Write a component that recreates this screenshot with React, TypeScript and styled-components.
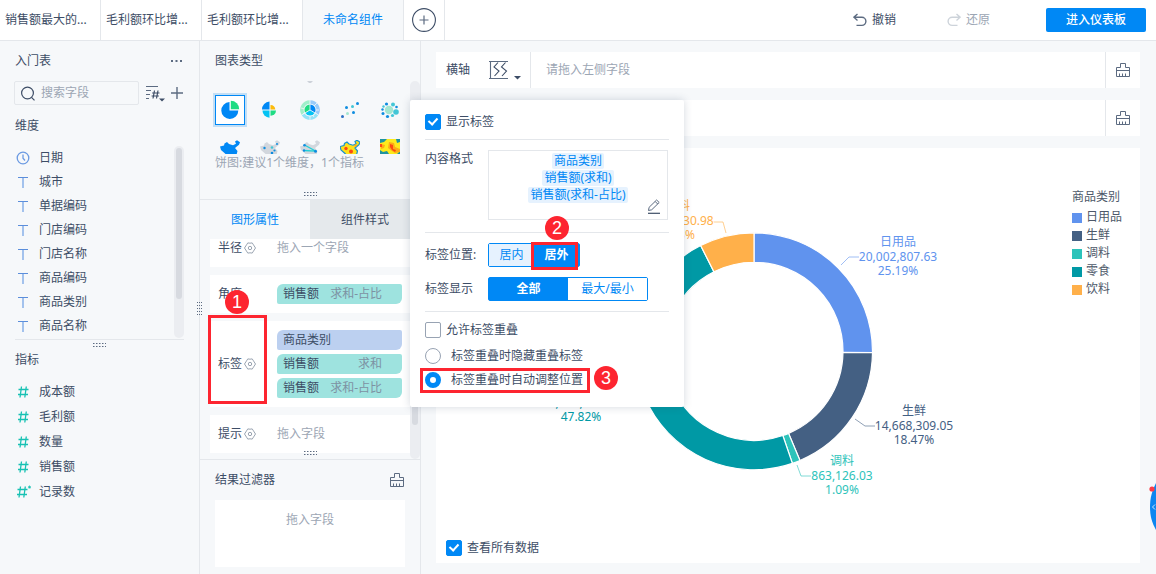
import React, { useState } from "react";
import styled, { createGlobalStyle, css } from "styled-components";

const color = {
  text: "#3d4d66",
  muted: "#9ca6b4",
  icon: "#5c6b81",
  line: "#e4e7eb",
  panel: "#f6f8fa",
  blue: "#0088f5",
  dimension: "#bcd0f0",
  measure: "#9ee3df",
  mark: "#fd2530",
};

const GlobalStyle = createGlobalStyle`
  *, *::before, *::after { box-sizing: border-box; }
  body {
    margin: 0;
    background: ${color.panel};
    color: ${color.text};
    font: 12px/18px "Noto Sans", "Noto Sans CJK SC", sans-serif;
  }
  button, input { font: inherit; color: inherit; }
  button { padding: 0; border: 0; background: none; cursor: pointer; }
  h2, p, ul { margin: 0; padding: 0; font: inherit; list-style: none; }
  svg { display: block; flex: none; }
`;

/* ---------- page frame ---------- */

const Page = styled.div`
  display: flex;
  flex-direction: column;
  min-height: 100vh;
  overflow: hidden;
`;

const TopBar = styled.header`
  display: flex;
  justify-content: space-between;
  background: #fff;
  border-bottom: 1px solid ${color.line};
`;

const Tabs = styled.nav`
  display: flex;
`;

const TabButton = styled.button<{ $active?: boolean }>`
  width: 101px;
  height: 40px;
  padding: 0 5px;
  border-right: 1px solid ${color.line};
  text-align: ${(p) => (p.$active ? "center" : "left")};
  white-space: nowrap;
  color: ${(p) => (p.$active ? color.blue : color.text)};
  background: ${(p) => (p.$active ? color.panel : "#fff")};
`;

const AddTab = styled.button`
  display: flex;
  align-items: center;
  justify-content: center;
  width: 41px;
  border-right: 1px solid ${color.line};
`;

const TopActions = styled.div`
  display: flex;
  align-items: center;
  gap: 51px;
  padding-right: 10px;
`;

const HistoryButton = styled.button`
  display: flex;
  align-items: center;
  gap: 5px;
  &:disabled {
    color: ${color.muted};
  }
`;

const PrimaryButton = styled.button`
  width: 100px;
  height: 24px;
  margin-left: 5px;
  border-radius: 2px;
  background: ${color.blue};
  color: #fff;
  font-weight: 500;
`;

const Workspace = styled.div`
  display: flex;
  flex: 1;
`;

const SideColumn = styled.aside<{ $width: number }>`
  position: relative;
  display: flex;
  flex-direction: column;
  flex: none;
  width: ${(p) => p.$width}px;
  border-right: 1px solid ${color.line};
`;

const PanelHeading = styled.div`
  display: flex;
  align-items: center;
  justify-content: space-between;
  height: 40px;
  padding: 0 16px 0 15px;
`;

const IconButton = styled.button`
  display: flex;
  align-items: center;
  justify-content: center;
`;

const Track = styled.div`
  display: flex;
  justify-content: center;
  align-items: flex-start;
  flex: none;
  width: 10px;
  padding: 2px 0;
  border-radius: 5px;
  background: #ebedf1;
`;

const Thumb = styled.div<{ $size: number }>`
  width: 6px;
  height: ${(p) => p.$size}px;
  border-radius: 3px;
  background: #d7dae0;
`;

/* ---------- field list ---------- */

const SearchRow = styled.div`
  display: flex;
  align-items: center;
  gap: 6px;
  padding: 0 16px 0 14px;
`;

const SearchBox = styled.label`
  display: flex;
  align-items: center;
  gap: 6px;
  flex: 1;
  min-width: 0;
  height: 24px;
  padding-left: 6px;
  border: 1px solid ${color.line};
  border-radius: 2px;
`;

const SearchInput = styled.input`
  width: 80px;
  padding: 0;
  border: 0;
  outline: 0;
  background: none;
  &::placeholder {
    color: ${color.muted};
  }
`;

const GroupTitle = styled.h2<{ $height: number }>`
  padding-left: 15px;
  line-height: ${(p) => p.$height}px;
`;

const ScrollList = styled.div`
  display: flex;
  margin: 0 15px;
  padding-bottom: 1px;
  border-bottom: 1px solid ${color.line};
`;

const FieldList = styled.ul<{ $row: number }>`
  flex: 1;
  li {
    display: flex;
    align-items: center;
    gap: 8px;
    height: ${(p) => p.$row}px;
  }
`;

const MeasureList = styled(FieldList)`
  padding: 6px 15px;
`;

const Grip = styled.div`
  display: flex;
  justify-content: center;
  padding: 3px 0 0;
`;

const ColumnGrip = styled.div`
  position: absolute;
  right: -3px;
  top: 261px;
`;

/* ---------- chart settings ---------- */

const ChartTypeScroll = styled.div`
  display: flex;
  height: 73px;
  overflow: hidden;
`;

const ChartTypeGrid = styled.div`
  display: grid;
  grid-template-columns: repeat(5, 30px);
  gap: 9px 10px;
  flex: 1;
  align-content: start;
  padding-left: 15px;
`;

const PreviousRow = styled.div`
  display: flex;
  justify-content: center;
  grid-column: 1 / -1;
  height: 5px;
`;

const ChartTypeButton = styled.button<{ $active?: boolean }>`
  display: flex;
  align-items: center;
  justify-content: center;
  width: 30px;
  height: 30px;
  ${(p) =>
    p.$active &&
    css`
      border: 1px solid ${color.blue};
      background: #fff;
      box-shadow: 0 0 0 2px #c3dff5;
    `}
`;

const ChartHint = styled.p`
  padding-left: 15px;
  line-height: 18px;
  color: ${color.muted};
`;

const TypeGrip = styled(Grip)`
  padding: 20px 0 3px;
  border-bottom: 1px solid ${color.line};
`;

const SettingTabs = styled.div`
  display: flex;
`;

const SettingTab = styled.button<{ $active?: boolean }>`
  flex: 1;
  height: 39px;
  color: ${(p) => (p.$active ? color.blue : color.text)};
  background: ${(p) => (p.$active ? "transparent" : "#e5e9ec")};
`;

const Attributes = styled.section`
  position: relative;
  display: flex;
  border-bottom: 1px solid ${color.line};
`;

const AttributeRows = styled.div`
  display: flex;
  flex-direction: column;
  gap: 8px;
  flex: 1;
  padding: 0 0 6px 10px;
`;

const AttributeRow = styled.div<{ $cut?: boolean }>`
  position: relative;
  display: flex;
  align-items: center;
  padding: ${(p) => (p.$cut ? "0 8px 10px" : "9px 8px")};
  background: #fff;
`;

const AttributeName = styled.div`
  display: flex;
  align-items: center;
  gap: 2px;
  width: 59px;
`;

const Pills = styled.div`
  display: flex;
  flex-direction: column;
  gap: 4px;
  flex: 1;
`;

const Pill = styled.div<{ $kind: "dimension" | "measure" }>`
  display: flex;
  justify-content: space-between;
  height: 20px;
  padding: 0 20px 0 6px;
  border-radius: 6px 2px;
  line-height: 20px;
  background: ${(p) => color[p.$kind]};
  span + span {
    color: #7d92a3;
  }
`;

const Placeholder = styled.span`
  line-height: 18px;
  color: ${color.muted};
`;

const EmptyDrop = styled(Placeholder)`
  line-height: 20px;
`;

const BottomGrip = styled.div`
  position: absolute;
  right: 0;
  bottom: 4px;
  left: 0;
  display: flex;
  justify-content: center;
`;

const FilterDrop = styled.div`
  flex: 1;
  margin: 0 15px 7px;
  padding-top: 11px;
  text-align: center;
  color: ${color.muted};
  background: #fff;
`;

/* ---------- canvas ---------- */

const Canvas = styled.main`
  position: relative;
  display: flex;
  flex-direction: column;
  gap: 12px;
  flex: 1;
  min-width: 0;
  padding: 11px 16px 11px 15px;
`;

const AxisRow = styled.div`
  display: flex;
  height: 36px;
  background: #fff;
`;

const AxisName = styled.div`
  display: flex;
  align-items: center;
  gap: 19px;
  width: 95px;
  padding-left: 10px;
  border-right: 1px solid ${color.line};
`;

const AxisDrop = styled.div`
  flex: 1;
  padding-left: 15px;
  line-height: 36px;
  color: ${color.muted};
`;

const AxisClear = styled(IconButton)`
  width: 35px;
  border-left: 1px solid ${color.line};
`;

const ChartCard = styled.section`
  display: flex;
  flex-direction: column;
  flex: 1;
  background: #fff;
`;

const ChartArea = styled.div`
  display: flex;
  flex: 1;
`;

const Plot = styled.div`
  display: flex;
  justify-content: center;
  flex: 1;
`;

const Legend = styled.div`
  width: 68px;
  padding-top: 40px;
  color: #4d5869;
`;

const LegendList = styled.ul`
  padding-top: 2px;
  li {
    display: flex;
    align-items: center;
    gap: 4px;
    height: 18px;
  }
`;

const Swatch = styled.span<{ $color: string }>`
  width: 10px;
  height: 10px;
  margin-top: 2px;
  background: ${(p) => p.$color};
`;

const ChartFooter = styled.div`
  padding: 0 10px 7px;
`;

const SliceText = styled.text`
  font-size: 12px;
  text-anchor: middle;
  stroke: #fff;
  stroke-width: 2px;
  paint-order: stroke;
`;

/* ---------- form controls ---------- */

const Choice = styled.label<{ $gap: number }>`
  display: flex;
  align-items: center;
  gap: ${(p) => p.$gap}px;
  height: 16px;
`;

const Checkbox = styled.input.attrs({ type: "checkbox" })`
  appearance: none;
  position: relative;
  width: 16px;
  height: 16px;
  margin: 0;
  border: 1px solid #98a3b3;
  border-radius: 2px;
  background: #fff;
  &:checked {
    border-color: ${color.blue};
    background: ${color.blue};
  }
  &:checked::after {
    content: "";
    position: absolute;
    left: 4px;
    top: 1px;
    width: 6px;
    height: 9px;
    border: solid #fff;
    border-width: 0 2px 2px 0;
    transform: rotate(42deg);
  }
`;

const Radio = styled.input.attrs({ type: "radio" })`
  appearance: none;
  width: 16px;
  height: 16px;
  margin: 0;
  border: 1px solid #98a3b3;
  border-radius: 50%;
  background: #fff;
  &:checked {
    border: 5px solid ${color.blue};
  }
`;

/* ---------- label popup ---------- */

const Popup = styled.div`
  position: absolute;
  z-index: 2;
  left: -11px;
  top: 59px;
  width: 274px;
  padding: 0 15px;
  border-radius: 2px;
  background: #fff;
  box-shadow: 0 0 8px rgba(40, 60, 90, 0.2);
`;

const PopupSection = styled.div<{ $pad: string; $gap?: number; $last?: boolean }>`
  display: flex;
  flex-direction: column;
  gap: ${(p) => p.$gap ?? 0}px;
  padding: ${(p) => p.$pad};
  border-bottom: ${(p) => (p.$last ? "0" : `1px solid ${color.line}`)};
`;

const FormRow = styled.div<{ $top?: boolean }>`
  display: flex;
  align-items: ${(p) => (p.$top ? "flex-start" : "center")};
`;

const FormName = styled.span`
  width: 63px;
`;

const FormatBox = styled.div`
  position: relative;
  display: flex;
  flex-direction: column;
  align-items: center;
  gap: 1px;
  width: 180px;
  height: 70px;
  padding-top: 2px;
  border: 1px solid ${color.line};
`;

const Token = styled.span`
  padding: 0 2px;
  border-radius: 2px;
  line-height: 16px;
  color: ${color.blue};
  background: #e6f2fe;
`;

const EditButton = styled(IconButton)`
  position: absolute;
  right: 6px;
  bottom: 5px;
`;

const Segments = styled.div`
  position: relative;
  display: flex;
  height: 24px;
  border: 1px solid ${color.blue};
  border-radius: 2px;
`;

const Segment = styled.button<{ $width: number; $active?: boolean; $tint?: boolean }>`
  width: ${(p) => p.$width}px;
  line-height: 22px;
  color: ${(p) => (p.$active ? "#fff" : color.blue)};
  font-weight: ${(p) => (p.$active ? 700 : 400)};
  background: ${(p) => (p.$active ? color.blue : p.$tint ? "#e6f2fe" : "#fff")};
`;

const RadioGroup = styled.div`
  display: flex;
  flex-direction: column;
  gap: 8px;
`;

const RadioRow = styled.div`
  position: relative;
`;

/* ---------- step marks over the page ---------- */

const markPlace = {
  name: { frame: [-2, -6, 59, 89], badge: [15, -31] },
  outside: { frame: [42, -2, 47, 28], badge: [56, -28] },
  adjust: { frame: [-5, -4, 170, 25], badge: [169, -6] },
};

type MarkSpot = keyof typeof markPlace;

const MarkFrame = styled.div<{ $spot: MarkSpot }>`
  position: absolute;
  z-index: 1;
  left: ${(p) => markPlace[p.$spot].frame[0]}px;
  top: ${(p) => markPlace[p.$spot].frame[1]}px;
  width: ${(p) => markPlace[p.$spot].frame[2]}px;
  height: ${(p) => markPlace[p.$spot].frame[3]}px;
  border: 3px solid ${color.mark};
  pointer-events: none;
`;

const MarkBadge = styled.span<{ $spot: MarkSpot }>`
  position: absolute;
  z-index: 1;
  left: ${(p) => markPlace[p.$spot].badge[0]}px;
  top: ${(p) => markPlace[p.$spot].badge[1]}px;
  width: 24px;
  height: 24px;
  border-radius: 50%;
  background: ${color.mark};
  color: #fff;
  font: 18px/24px "Liberation Sans", sans-serif;
  text-align: center;
`;

const HelpHandle = styled.button`
  position: fixed;
  right: 0;
  top: 482px;
`;

/* ---------- icons ---------- */

const PlusIcon = ({ size }: { size: number }) => (
  <svg width={size} height={size} viewBox="0 0 12 12" fill="none" stroke={color.icon} strokeWidth="1.4">
    <path d="M6 0v12M0 6h12" />
  </svg>
);

const AddIcon = () => (
  <svg width="24" height="24" viewBox="0 0 24 24" fill="none" stroke={color.text}>
    <circle cx="12" cy="12" r="11.4" strokeWidth="1.1" />
    <path d="M12 7.5v9M7.5 12h9" stroke={color.icon} strokeWidth="1.2" />
  </svg>
);

const TurnIcon = ({ forward }: { forward?: boolean }) => (
  <svg width="14" height="14" viewBox="0 0 14 14" fill="none" stroke={forward ? "#cdd3da" : color.icon} strokeWidth="1.4">
    {forward ? (
      <path d="M9.5 1l3.6 3.2-3.6 3.2M13 4.2H5.2a4.1 4.1 0 0 0 0 8.2h5.3" />
    ) : (
      <path d="M4.5 1L.9 4.2l3.6 3.2M1 4.2h7.8a4.1 4.1 0 0 1 0 8.2H3.5" />
    )}
  </svg>
);

const MoreIcon = () => (
  <svg width="12" height="4" viewBox="0 0 12 4" fill={color.icon}>
    <path d="M0 1h2v2H0zM4.500 1h2v2h-2zM9 1h2v2H9z" />
  </svg>
);

const SearchIcon = () => (
  <svg width="14" height="15" viewBox="0 0 14 15" fill="none" stroke={color.text} strokeWidth="1.2">
    <circle cx="6.5" cy="7" r="5.9" />
    <path d="M10.500 11.300l3 3" />
  </svg>
);

const SortIcon = () => (
  <svg width="20" height="18" viewBox="0 0 20 18" fill="none" stroke={color.icon} strokeWidth="1.2">
    <path d="M1 2.500h12M1 6.500h5M1 10.500h4M1 14.500h3" />
    <path d="M9.500 6.500l-1.500 8M13 6.500l-1.500 8M7.200 9h7.300M6.600 12h7.200" stroke={color.text} />
    <path d="M14 14.500h6l-3 3z" fill={color.text} stroke="none" />
  </svg>
);

const ClockIcon = () => (
  <svg width="16" height="14" viewBox="0 0 16 14" fill="none" stroke="#6b9ae2" strokeWidth="1.3">
    <circle cx="8" cy="7" r="5.800" />
    <path d="M8 3.500v3.700l2 2.300" />
  </svg>
);

const TextIcon = () => (
  <svg width="16" height="14" viewBox="0 0 16 14" fill="none">
    <path d="M3 2.500h10" stroke="#5b8edb" />
    <path d="M8 3v10" stroke="#8fb4ea" strokeWidth="1.6" />
  </svg>
);

const NumberIcon = ({ starred }: { starred?: boolean }) => (
  <svg width="16" height="14" viewBox="0 0 16 14" fill="none" stroke="#17c1b3" strokeWidth="1.3">
    <g transform={starred ? "translate(-1 0)" : undefined}>
      <path d="M6.500 1.500l-1.500 11M11.300 1.500l-1.500 11M3.500 4.500h10M3 9.500h10" />
    </g>
    {starred && <path d="M14.500 .5v3M13 1.500l3 1.500M16 1.500l-3 1.500" strokeWidth=".8" />}
  </svg>
);

const GripIcon = ({ vertical }: { vertical?: boolean }) => {
  const dots = [0, 1, 2, 3, 4].flatMap((i) => (vertical ? [0, 2, 4].map((j) => [j, i * 3]) : [0, 3].map((j) => [i * 3, j])));
  return (
    <svg width={vertical ? 5 : 13} height={vertical ? 13 : 4} fill={color.icon}>
      {dots.map(([x, y]) => (
        <rect key={`${x}-${y}`} x={x} y={y} width={vertical ? 1 : 1.5} height="1" />
      ))}
    </svg>
  );
};

const BroomIcon = () => (
  <svg width="14" height="14" viewBox="0 0 14 14" fill="none" stroke={color.icon}>
    <path d="M4.500 4.500v-4h5v4h4v9H.5v-9zM.5 7.500h13M3.500 10.500v3M6.500 10.500v3M9.500 10.500v3" />
  </svg>
);

const GearIcon = () => (
  <svg width="12" height="12" viewBox="0 0 12 12" fill="none" stroke="#9ba5b2">
    <path d="M3.800 .9l2.200.3 2.200-.3 1.300 2L11.500 6l-2 3.100-1.300 2L6 10.800l-2.200.3-1.300-2L.5 6l2-3.100z" strokeLinejoin="round" />
    <circle cx="6" cy="6" r="1.700" />
  </svg>
);

const AxisIcon = () => (
  <svg width="32" height="20" viewBox="0 0 32 20" fill="none" stroke={color.icon}>
    <path d="M0 1.500h19M0 18.500h19M1.500 1v18" strokeWidth="1.100" />
    <path d="M9 2.500L5 7l5 4-4.500 5M16.500 2.500l-4 4.500 5 4-4.500 5" stroke={color.text} strokeWidth="1.1" />
    <path d="M25 16h7l-3.500 3.500z" fill={color.text} stroke="none" />
  </svg>
);

const PencilIcon = () => (
  <svg width="14" height="15" viewBox="0 0 14 15" fill="none" stroke={color.icon}>
    <path d="M1.500 11.500l.6-3.200L9.600 1l2.600 2.500-7.500 7.300zM8.200 2.500l2.500 2.500" />
    <path d="M1 14.300h12" stroke={color.text} strokeWidth="1.200" />
  </svg>
);

const chinaPath =
  "M0 6.5L4 5.500 4.500 3.500 7 2 9 4l4 1.200L16 3.700 15 1.500 17 .2 20 2.200 19 4.700 16.500 6.700 15 8l2.500 3-1 4-4.500 2-5-1-2-2.500L1 10z";

const PieIcon = () => (
  <svg width="20" height="20" viewBox="0 0 20 20">
    <path d="M9.500 2a8.500 8.500 0 1 0 8.800 8.500H9.500z" fill="#0088f5" />
    <path d="M10.800.8v8.500h8.400A8.400 8.400 0 0 0 10.800.8z" fill="#1fdc83" />
  </svg>
);

const RoseIcon = () => (
  <svg width="20" height="20" viewBox="0 0 20 20">
    <path d="M9.500 1.500v8H2a8 8 0 0 1 7.500-8z" fill="#0088f5" />
    <path d="M10.500 5v4.500h4.800A5 5 0 0 0 10.500 5z" fill="#fcbb0c" />
    <path d="M9.500 10.500v7.300A7.300 7.300 0 0 1 2.500 10.500z" fill="#04c3f3" />
    <path d="M10.500 10.500v5.300a5.300 5.300 0 0 0 5.500-5.300z" fill="#1fdc83" />
  </svg>
);

const SunburstIcon = () => (
  <svg width="20" height="20" viewBox="0 0 20 20" fill="none">
    <g strokeWidth="3.500">
      <path d="M10 2a8 8 0 0 1 7 12" stroke="#98cbfa" />
      <path d="M17 14a8 8 0 0 1-14 0" stroke="#93e2f7" />
      <path d="M3 14a8 8 0 0 1 7-12" stroke="#a0efca" />
    </g>
    <path d="M17 3l-4 4M1 8l4 1M19 10h-4M10 20v-4M3 14l3-2M14 17l-2-3" stroke={color.panel} strokeWidth=".8" />
    <path d="M10 10V4.500a5.500 5.500 0 0 1 4.800 8.200z" fill="#0088f5" />
    <path d="M10 10l4.800 2.700a5.500 5.500 0 0 1-9.600 0z" fill="#04c3f3" />
    <path d="M10 10l-4.800 2.700A5.500 5.500 0 0 1 10 4.500z" fill="#1fdc83" />
    <path d="M10 10V0M10 10l8.500 5M10 10l-8.500 5" stroke={color.panel} strokeWidth=".8" />
  </svg>
);

const dotSets = {
  scatter: [
    [2.5, 16.5, 1.5, "#2b6fc4"],
    [6.5, 7.5, 1.5, "#0f8de0"],
    [7.5, 13.5, 1.5, "#a3e6d0"],
    [12.5, 6.5, 1.5, "#43c6d6"],
    [13.5, 12.5, 1.5, "#0f8de0"],
    [17.5, 3.5, 1.5, "#0f8de0"],
  ],
  bubble: [
    [9, 10, 4.2, "#a3e6d0"],
    [16, 12, 2.8, "#43c6d6"],
    [13, 4.5, 2, "#43c6d6"],
    [6.5, 4, 1.6, "#0f8de0"],
    [16.5, 7, 1.3, "#0f8de0"],
    [3.5, 6.5, 1.2, "#43c6d6"],
    [2.5, 9.5, 1.2, "#0f8de0"],
    [3, 13.5, 1.5, "#0f8de0"],
    [7.5, 16.5, 1.6, "#0f8de0"],
    [12.5, 15.5, 1.6, "#43c6d6"],
  ],
} as const;

const DotsIcon = ({ kind }: { kind: keyof typeof dotSets }) => (
  <svg width="20" height="20" viewBox="0 0 20 20">
    {dotSets[kind].map(([x, y, r, fill]) => (
      <circle key={`${x}-${y}`} cx={x} cy={y} r={r} fill={fill} />
    ))}
  </svg>
);

const MapIcon = ({ kind }: { kind: "area" | "point" | "flow" | "heat" }) => (
  <svg width="20" height="18" viewBox="0 0 20 18">
    <path d={chinaPath} fill={kind === "area" ? "#0088f5" : kind === "heat" ? "#fde01b" : "#d2d7dd"} stroke={kind === "heat" ? "#1793cf" : "none"} strokeWidth="1.200" />
    {kind === "point" && (
      <g fill="#0f8de0">
        <circle cx="4.5" cy="8" r="1.200" />
        <circle cx="12" cy="7.5" r="1.300" fill="#43c6d6" />
        <circle cx="17" cy="4" r="1" />
        <circle cx="14.5" cy="10.5" r="1.100" />
        <circle cx="12" cy="13" r="1.300" />
      </g>
    )}
    {kind === "flow" && (
      <>
        <path d="M4.500 5l11 6M4 10.500l11.500.7" stroke="#20cfd8" strokeWidth="1.300" />
        <g fill="#0f8de0">
          <circle cx="4.5" cy="5.2" r="1.300" />
          <circle cx="4" cy="10.5" r="1.200" />
          <circle cx="15.5" cy="11.2" r="1.500" />
        </g>
      </>
    )}
    {kind === "heat" && (
      <g fill="#fb4a13">
        <circle cx="6" cy="8.5" r="1.700" />
        <circle cx="11" cy="11.5" r="2" />
        <circle cx="15.5" cy="5.5" r="1.300" fill="#fca911" />
      </g>
    )}
  </svg>
);

const HeatIcon = () => (
  <svg width="20" height="20" viewBox="0 0 20 20">
    <path d="M0 0h20v20H0z" fill="#fdea1c" />
    <path d="M0 0h7L4 3 0 4zM16 0h4v3l-3 1zM20 12l-3 3 1 5h2zM0 11l3 2 4-1 2 3 3 1v4H0z" fill="#1f94a0" />
    <path d="M1 5l4 1-1 3-3 1zM9 3l5 1 1 4 5 2v3l-5 1-3-2-4-3z" fill="#fcab17" />
    <path d="M0 5h2v3H0zM10 5l3 1v4l3 1-1 2-3-2-2-3z" fill="#fb4a13" />
  </svg>
);

/* ---------- chart ---------- */

const slices = [
  { name: "日用品", value: "20,002,807.63", share: 25.19, fill: "#6093ee", x: 364, y: 98, line: "307,117 315,109 325,109" },
  { name: "生鲜", value: "14,668,309.05", share: 18.47, fill: "#446083", x: 380, y: 267, line: "321,271 331,278 341,278" },
  { name: "调料", value: "863,126.03", share: 1.09, fill: "#2dc3ba", x: 308, y: 317, line: "263,317 267,328 277,328" },
  { name: "零食", value: "37,972,441.20", share: 47.82, fill: "#0099a5", x: 47, y: 244, line: "108,240 98,254 86,254" },
  { name: "饮料", value: "5,900,130.98", share: 7.43, fill: "#ffb04a", x: 144, y: 62, line: "192,85 189,74 179,74" },
];

const center = { x: 220, y: 203.3 };
const outer = 118.5;
const inner = 89;

const point = (share: number, radius: number) => {
  const angle = (share / 100) * Math.PI * 2;
  return `${center.x + radius * Math.sin(angle)} ${center.y - radius * Math.cos(angle)}`;
};

const DonutChart = () => {
  let start = 0;
  return (
    <svg width="440" height="380" viewBox="0 0 440 380" role="img" aria-label="商品类别">
      {slices.map((slice) => {
        const from = start;
        const to = (start += slice.share);
        return (
          <path
            key={slice.name}
            d={`M${point(from, outer)}A${outer} ${outer} 0 0 1 ${point(to, outer)}L${point(to, inner)}A${inner} ${inner} 0 0 0 ${point(from, inner)}Z`}
            fill={slice.fill}
            stroke="#fff"
            strokeWidth="1.200"
          />
        );
      })}
      {slices.map((slice) => (
        <g key={slice.name} fill={slice.fill}>
          <polyline points={slice.line} fill="none" stroke={slice.fill} strokeOpacity=".6" />
          <SliceText x={slice.x} y={slice.y}>{slice.name}</SliceText>
          <SliceText x={slice.x} y={slice.y + 15}>{slice.value}</SliceText>
          <SliceText x={slice.x} y={slice.y + 29}>{slice.share.toFixed(2)}%</SliceText>
        </g>
      ))}
    </svg>
  );
};

/* ---------- page ---------- */

const tabs = ["销售额最大的...", "毛利额环比增...", "毛利额环比增..."];
const dimensions = ["日期", "城市", "单据编码", "门店编码", "门店名称", "商品编码", "商品类别", "商品名称"];
const measures = ["成本额", "毛利额", "数量", "销售额", "记录数"];

const chartTypes = [
  { name: "饼图", icon: <PieIcon /> },
  { name: "玫瑰图", icon: <RoseIcon /> },
  { name: "多层饼图", icon: <SunburstIcon /> },
  { name: "散点图", icon: <DotsIcon kind="scatter" /> },
  { name: "聚合气泡图", icon: <DotsIcon kind="bubble" /> },
  { name: "区域地图", icon: <MapIcon kind="area" /> },
  { name: "点地图", icon: <MapIcon kind="point" /> },
  { name: "流向地图", icon: <MapIcon kind="flow" /> },
  { name: "热力地图", icon: <MapIcon kind="heat" /> },
  { name: "热力图", icon: <HeatIcon /> },
];

const Setting = ({ name, plain }: { name: string; plain?: boolean }) => (
  <AttributeName>
    {name}
    {!plain && (
      <IconButton aria-label={`${name}设置`}>
        <GearIcon />
      </IconButton>
    )}
  </AttributeName>
);

const LabelPopup = () => {
  const [place, setPlace] = useState("outside");
  const [range, setRange] = useState("all");
  return (
    <Popup role="dialog" aria-label="标签">
      <PopupSection $pad="14px 0 9px">
        <Choice $gap={5}>
          <Checkbox defaultChecked />
          显示标签
        </Choice>
      </PopupSection>
      <PopupSection $pad="10px 0 12px">
        <FormRow $top>
          <FormName>内容格式</FormName>
          <FormatBox>
            <Token>商品类别</Token>
            <Token>销售额(求和)</Token>
            <Token>销售额(求和-占比)</Token>
            <EditButton aria-label="编辑">
              <PencilIcon />
            </EditButton>
          </FormatBox>
        </FormRow>
      </PopupSection>
      <PopupSection $pad="10px 0" $gap={10}>
        <FormRow>
          <FormName>标签位置:</FormName>
          <Segments>
            <Segment $width={45} $tint $active={place === "inside"} onClick={() => setPlace("inside")}>居内</Segment>
            <Segment $width={45} $tint $active={place === "outside"} onClick={() => setPlace("outside")}>居外</Segment>
            <MarkFrame $spot="outside" />
            <MarkBadge $spot="outside">2</MarkBadge>
          </Segments>
        </FormRow>
        <FormRow>
          <FormName>标签显示</FormName>
          <Segments>
            <Segment $width={79} $active={range === "all"} onClick={() => setRange("all")}>全部</Segment>
            <Segment $width={79} $active={range === "ends"} onClick={() => setRange("ends")}>最大/最小</Segment>
          </Segments>
        </FormRow>
      </PopupSection>
      <PopupSection $pad="10px 0 19px" $gap={10} $last>
        <Choice $gap={5}>
          <Checkbox />
          允许标签重叠
        </Choice>
        <RadioGroup>
          <RadioRow>
            <Choice $gap={10}>
              <Radio name="overlap" />
              标签重叠时隐藏重叠标签
            </Choice>
          </RadioRow>
          <RadioRow>
            <Choice $gap={10}>
              <Radio name="overlap" defaultChecked />
              标签重叠时自动调整位置
            </Choice>
            <MarkFrame $spot="adjust" />
            <MarkBadge $spot="adjust">3</MarkBadge>
          </RadioRow>
        </RadioGroup>
      </PopupSection>
    </Popup>
  );
};

export default function App() {
  return (
    <Page>
      <GlobalStyle />
      <TopBar>
        <Tabs>
          {tabs.map((tab, i) => (
            <TabButton key={i}>{tab}</TabButton>
          ))}
          <TabButton $active>未命名组件</TabButton>
          <AddTab aria-label="添加组件">
            <AddIcon />
          </AddTab>
        </Tabs>
        <TopActions>
          <HistoryButton>
            <TurnIcon />
            撤销
          </HistoryButton>
          <HistoryButton disabled>
            <TurnIcon forward />
            还原
          </HistoryButton>
          <PrimaryButton>进入仪表板</PrimaryButton>
        </TopActions>
      </TopBar>

      <Workspace>
        <SideColumn $width={200}>
          <PanelHeading>
            <h2>入门表</h2>
            <IconButton aria-label="更多">
              <MoreIcon />
            </IconButton>
          </PanelHeading>
          <SearchRow>
            <SearchBox>
              <SearchIcon />
              <SearchInput placeholder="搜索字段" aria-label="搜索字段" />
            </SearchBox>
            <IconButton aria-label="排序">
              <SortIcon />
            </IconButton>
            <IconButton aria-label="添加字段">
              <PlusIcon size={12} />
            </IconButton>
          </SearchRow>
          <GroupTitle $height={41}>维度</GroupTitle>
          <ScrollList>
            <FieldList $row={24}>
              {dimensions.map((field, i) => (
                <li key={field}>
                  {i === 0 ? <ClockIcon /> : <TextIcon />}
                  {field}
                </li>
              ))}
            </FieldList>
            <Track>
              <Thumb $size={151} />
            </Track>
          </ScrollList>
          <Grip>
            <GripIcon />
          </Grip>
          <GroupTitle $height={26}>指标</GroupTitle>
          <MeasureList $row={25}>
            {measures.map((field, i) => (
              <li key={field}>
                <NumberIcon starred={i === 4} />
                {field}
              </li>
            ))}
          </MeasureList>
          <ColumnGrip>
            <GripIcon vertical />
          </ColumnGrip>
        </SideColumn>

        <SideColumn $width={221}>
          <PanelHeading>
            <h2>图表类型</h2>
          </PanelHeading>
          <ChartTypeScroll>
            <ChartTypeGrid>
              <PreviousRow>
                <svg width="6" height="2">
                  <path d="M0 0h6L4 2H2z" fill="#cdd2d9" />
                </svg>
              </PreviousRow>
              {chartTypes.map((type, i) => (
                <ChartTypeButton key={type.name} $active={i === 0} aria-label={type.name}>
                  {type.icon}
                </ChartTypeButton>
              ))}
            </ChartTypeGrid>
            <Track />
          </ChartTypeScroll>
          <ChartHint>饼图:建议1个维度，1个指标</ChartHint>
          <TypeGrip>
            <GripIcon />
          </TypeGrip>
          <SettingTabs>
            <SettingTab $active>图形属性</SettingTab>
            <SettingTab>组件样式</SettingTab>
          </SettingTabs>
          <Attributes>
            <AttributeRows>
              <AttributeRow $cut>
                <Setting name="半径" />
                <Placeholder>拖入一个字段</Placeholder>
              </AttributeRow>
              <AttributeRow>
                <Setting name="角度" plain />
                <Pills>
                  <Pill $kind="measure"><span>销售额</span><span>求和-占比</span></Pill>
                </Pills>
              </AttributeRow>
              <AttributeRow>
                <Setting name="标签" />
                <Pills>
                  <Pill $kind="dimension"><span>商品类别</span></Pill>
                  <Pill $kind="measure"><span>销售额</span><span>求和</span></Pill>
                  <Pill $kind="measure"><span>销售额</span><span>求和-占比</span></Pill>
                </Pills>
                <MarkFrame $spot="name" />
                <MarkBadge $spot="name">1</MarkBadge>
              </AttributeRow>
              <AttributeRow>
                <Setting name="提示" />
                <EmptyDrop>拖入字段</EmptyDrop>
              </AttributeRow>
            </AttributeRows>
            <Track>
              <Thumb $size={184} />
            </Track>
            <BottomGrip>
              <GripIcon />
            </BottomGrip>
          </Attributes>
          <PanelHeading>
            <h2>结果过滤器</h2>
            <IconButton aria-label="清空过滤器">
              <BroomIcon />
            </IconButton>
          </PanelHeading>
          <FilterDrop>拖入字段</FilterDrop>
        </SideColumn>

        <Canvas>
          <AxisRow>
            <AxisName>
              横轴
              <IconButton aria-label="横轴设置">
                <AxisIcon />
              </IconButton>
            </AxisName>
            <AxisDrop>请拖入左侧字段</AxisDrop>
            <AxisClear aria-label="清空横轴">
              <BroomIcon />
            </AxisClear>
          </AxisRow>
          <AxisRow>
            <AxisName />
            <AxisDrop />
            <AxisClear aria-label="清空纵轴">
              <BroomIcon />
            </AxisClear>
          </AxisRow>
          <ChartCard>
            <ChartArea>
              <Plot>
                <DonutChart />
              </Plot>
              <Legend>
                <p>商品类别</p>
                <LegendList>
                  {slices.map((slice) => (
                    <li key={slice.name}>
                      <Swatch $color={slice.fill} />
                      {slice.name}
                    </li>
                  ))}
                </LegendList>
              </Legend>
            </ChartArea>
            <ChartFooter>
              <Choice $gap={5}>
                <Checkbox defaultChecked />
                查看所有数据
              </Choice>
            </ChartFooter>
          </ChartCard>
          <LabelPopup />
        </Canvas>
      </Workspace>

      <HelpHandle aria-label="帮助">
        <svg width="8" height="50" viewBox="0 0 8 50">
          <path d="M8 1C4 9 2 16 2 25s2 16 6 23z" fill="#0d86f0" />
          <circle cx="4" cy="7" r="2.600" fill="#fb3b46" />
          <path d="M7 22.500L4.500 25 7 27.500" fill="none" stroke="#cfe6fd" />
        </svg>
      </HelpHandle>
    </Page>
  );
}
